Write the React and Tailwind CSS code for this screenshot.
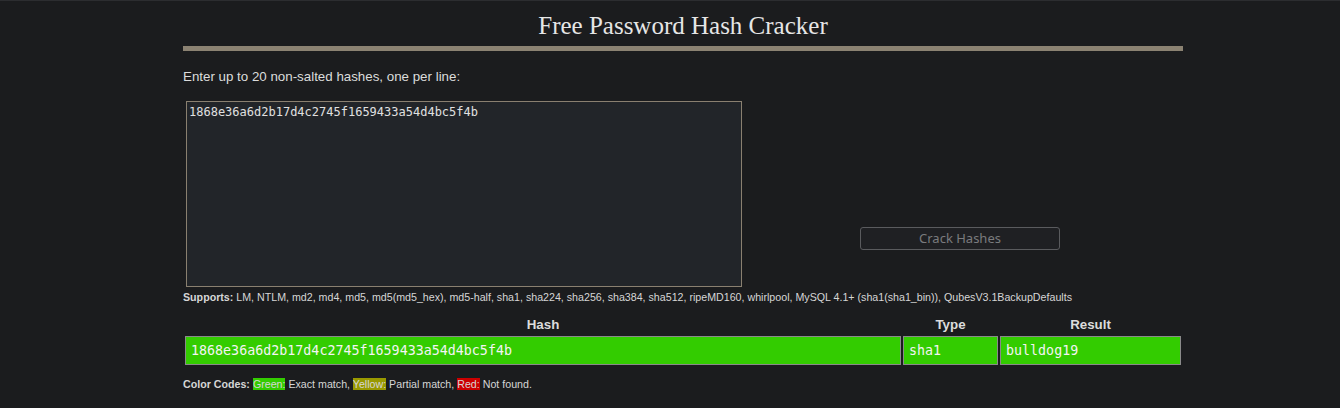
const hash = "1868e36a6d2b17d4c2745f1659433a54d4bc5f4b";

const supports =
  "LM, NTLM, md2, md4, md5, md5(md5_hex), md5-half, sha1, sha224, sha256, sha384, sha512, ripeMD160, whirlpool, MySQL 4.1+ (sha1(sha1_bin)), QubesV3.1BackupDefaults";

const results = [{ hash, type: "sha1", result: "bulldog19" }];

const App = () => {
  return (
    <div className="min-h-[408px] bg-[#1b1c1e] border-t border-[#2c2d30] text-[#dcdcdc] font-['Liberation_Sans',Arial,sans-serif]">
      <div className="ml-[183px] w-[1000px]">
        <h1 className="pt-[8px] text-center font-['Liberation_Serif','Times_New_Roman',serif] text-[25px] leading-[34px] text-[#e6e6e6]">
          Free Password Hash Cracker
        </h1>
        <div className="mt-[3px] h-[5px] bg-[#8b8272]" />

        <p className="mt-[18px] text-[13.33px] leading-[16px]">
          Enter up to 20 non-salted hashes, one per line:
        </p>

        <div className="mt-[16px] flex">
          <textarea
            className="ml-[3px] h-[186px] w-[556px] resize-none border border-[#8a8070] bg-[#222529] px-[2px] pt-[3px] font-['DejaVu_Sans_Mono',monospace] text-[12px] leading-[15px] text-[#e0e0e0] outline-none"
            defaultValue={hash}
          />
          <div className="flex flex-1 items-end pb-[37px] pl-[118px]">
            <button className="h-[23px] w-[200px] rounded-[3px] border border-[#5a5b5e] bg-[#1f2023] pt-[1px] font-['Noto_Sans',sans-serif] text-[13px] text-[#7a7b7e]">
              Crack Hashes
            </button>
          </div>
        </div>

        <p className="mt-[4px] text-[10.67px] leading-[13px] text-[#d6d6d6]">
          <b>Supports:</b> {supports}
        </p>

        <table className="mt-[10px] w-full border-separate border-spacing-[2px]">
          <thead>
            <tr className="text-[13.33px] leading-[18px] font-bold text-[#dcdcdc]">
              <th className="w-[716px]">Hash</th>
              <th className="w-[95px]">Type</th>
              <th>Result</th>
            </tr>
          </thead>
          <tbody>
            {results.map((r) => (
              <tr
                key={r.hash}
                className="font-['DejaVu_Sans_Mono',monospace] text-[13.33px] text-[#f4f4f4]"
              >
                <td className="h-[29px] border border-[#8a8a8a] bg-[#33cc00] pl-[5px]">
                  {r.hash}
                </td>
                <td className="border border-[#8a8a8a] bg-[#33cc00] pl-[5px]">
                  {r.type}
                </td>
                <td className="border border-[#8a8a8a] bg-[#33cc00] pl-[5px]">
                  {r.result}
                </td>
              </tr>
            ))}
          </tbody>
        </table>

        <p className="mt-[11px] text-[10.67px] leading-[13px] text-[#d6d6d6]">
          <b>Color Codes:</b> <span className="bg-[#33cc00]">Green:</span>{" "}
          Exact match, <span className="bg-[#999900]">Yellow:</span> Partial
          match, <span className="bg-[#cc0000]">Red:</span> Not found.
        </p>
      </div>
    </div>
  );
};

export default App;
